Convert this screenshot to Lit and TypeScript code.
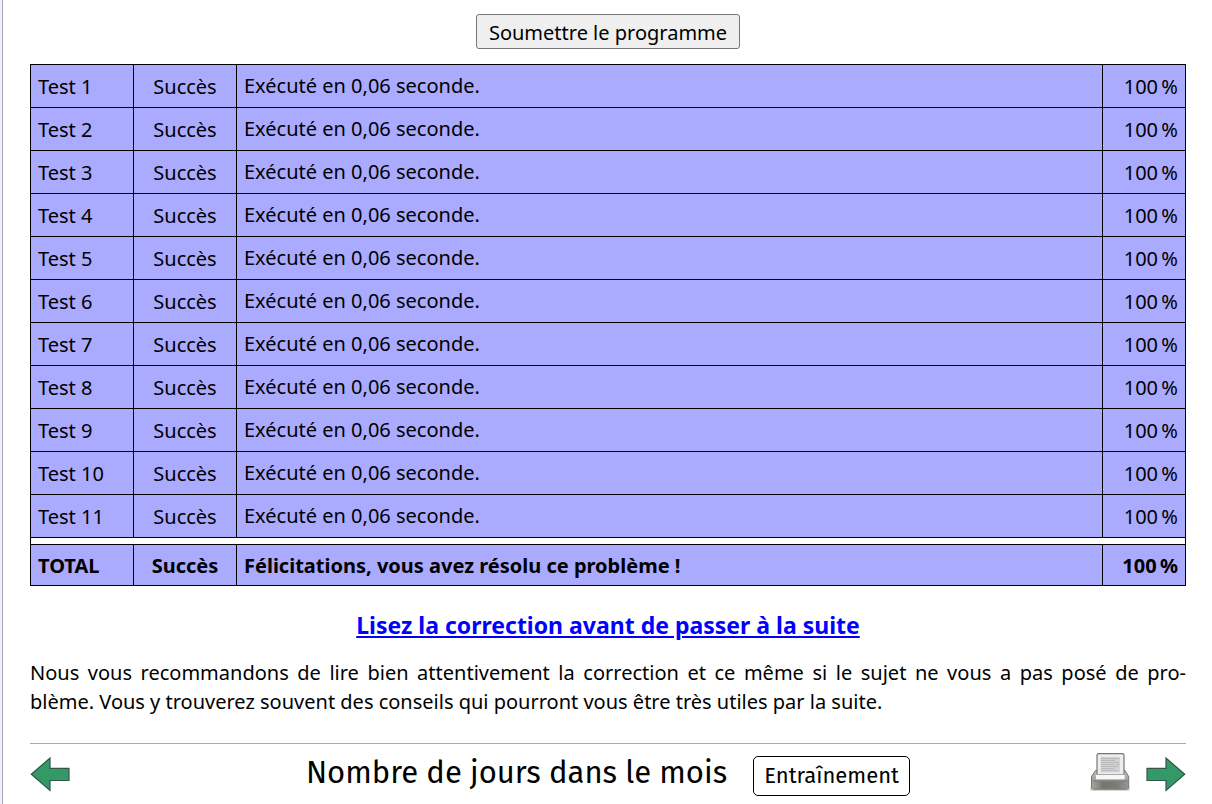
import { LitElement, html, css } from "lit";
import { customElement } from "lit/decorators.js";

interface TestResult {
  name: string;
  status: string;
  message: string;
  score: string;
}

const results: TestResult[] = Array.from({ length: 11 }, (_, i) => ({
  name: `Test ${i + 1}`,
  status: "Succès",
  message: "Exécuté en 0,06 seconde.",
  score: "100\u202f%",
}));

@customElement("result-table")
class ResultTable extends LitElement {
  static styles = css`
    :host {
      display: block;
    }
    table {
      width: 100%;
      border-collapse: collapse;
      border: 1px solid #000;
      table-layout: fixed;
    }
    .narrow {
      width: 103px;
    }
    .score-col {
      width: 83px;
    }
    th,
    td {
      box-sizing: border-box;
      height: 43px;
      padding: 0 7px;
      border: 1px solid #000;
      background: #aaaaff;
      font-weight: normal;
      text-align: left;
      vertical-align: middle;
    }
    .status {
      text-align: center;
    }
    .message {
      padding: 0 7px 2px;
    }
    .score {
      text-align: right;
    }
    .gap td {
      height: 7px;
      padding: 0;
      background: #fff;
    }
    .total th,
    .total td {
      height: 41px;
      padding: 1px 7px 0;
      font-weight: bold;
    }
  `;

  render() {
    return html`
      <table>
        <colgroup>
          <col class="narrow" />
          <col class="narrow" />
          <col />
          <col class="score-col" />
        </colgroup>
        <tbody>
          ${results.map(
            (r) => html`<tr>
              <th scope="row">${r.name}</th>
              <td class="status">${r.status}</td>
              <td class="message">${r.message}</td>
              <td class="score">${r.score}</td>
            </tr>`
          )}
          <tr class="gap"><td colspan="4"></td></tr>
          <tr class="total">
            <th scope="row">TOTAL</th>
            <td class="status">Succès</td>
            <td>Félicitations, vous avez résolu ce problème !</td>
            <td class="score">${"100\u202f%"}</td>
          </tr>
        </tbody>
      </table>
    `;
  }
}

@customElement("page-footer")
class PageFooter extends LitElement {
  static styles = css`
    :host {
      display: grid;
      grid-template-columns: 96px 1fr 96px;
      align-items: center;
      border-top: 1px solid #aaa;
      padding-top: 6px;
    }
    .middle {
      display: flex;
      justify-content: center;
      align-items: center;
      gap: 26px;
    }
    h1 {
      margin: 0;
      font-family: "Fira Sans", "Noto Sans", sans-serif;
      font-size: 31px;
      line-height: 40px;
      font-weight: normal;
      white-space: nowrap;
    }
    .tag {
      box-sizing: border-box;
      height: 40px;
      margin-top: 6px;
      padding: 0 10px;
      border: 1px solid #000;
      border-radius: 5px;
      font-family: "Fira Sans", "Noto Sans", sans-serif;
      font-size: 22px;
      line-height: 38px;
    }
    .nav {
      display: flex;
      align-items: center;
      gap: 16px;
    }
    .end {
      justify-content: flex-end;
    }
    a,
    svg {
      display: block;
    }
  `;

  render() {
    return html`
      <nav class="nav">
        <a href="#precedent" aria-label="Page précédente">
          <svg width="40" height="40" viewBox="0 0 40 40">
            <path d="M1.300 21.300 20 5V15.300H39V27.500H20V37.500Z" fill="#339966" stroke="#35564a" stroke-width="1.200" />
          </svg>
        </a>
      </nav>
      <div class="middle">
        <h1>Nombre de jours dans le mois</h1>
        <span class="tag">Entraînement</span>
      </div>
      <nav class="nav end">
        <a href="#imprimer" aria-label="Imprimer">
          <svg width="40" height="40" viewBox="0 0 40 40">
            <defs>
              <linearGradient id="body" x1="0" y1="0" x2="0" y2="1">
                <stop offset="0" stop-color="#c2c2bd" />
                <stop offset=".5" stop-color="#a2a29d" />
                <stop offset="1" stop-color="#8c8c87" />
              </linearGradient>
              <linearGradient id="front" x1="0" y1="0" x2="1" y2="0">
                <stop offset="0" stop-color="#a6a6a1" />
                <stop offset=".3" stop-color="#767671" />
                <stop offset=".7" stop-color="#7c7c77" />
                <stop offset="1" stop-color="#969691" />
              </linearGradient>
            </defs>
            <rect x="0" y="33.500" width="40" height="4.500" rx="2" fill="#999" opacity=".4" />
            <path d="M5.500 17.500H35L38.700 23.500V34Q38.700 36.200 36.500 36.200H3.700Q1.500 36.200 1.500 34V23.500Z" fill="url(#body)" stroke="#74746f" />
            <path d="M2 28.500H38.200V34Q38.200 35.700 36.500 35.700H3.700Q2 35.700 2 34Z" fill="url(#front)" />
            <path d="M8.700.700H32.300Q34 .700 34 2.400V21.500H7V2.400Q7 .700 8.700 .700Z" fill="#ededed" stroke="#777" stroke-width="1.200" />
            <path d="M10.700 4H30V19.500H10.700Z" fill="#d2d2d2" />
            <path d="M11 5.500H29M11 7.500H25M11 9.500H29M11 11.500H24M26 11.500H29M11 13.500H28M11 15.500H24M11 17.500H27" stroke="#bababa" />
            <path d="M6 22H34.700V26.300H6Z" fill="#f7f7f7" />
            <path d="M6 21.500H34.700" stroke="#a8a8a8" />
            <path d="M3 28H37.500" stroke="#73736e" />
          </svg>
        </a>
        <a href="#suivant" aria-label="Page suivante">
          <svg width="40" height="40" viewBox="0 0 40 40">
            <path d="M38.700 21.300 20 5V15.300H1V27.500H20V37.500Z" fill="#339966" stroke="#35564a" stroke-width="1.200" />
          </svg>
        </a>
      </nav>
    `;
  }
}

@customElement("app-root")
class AppRoot extends LitElement {
  static styles = css`
    :host {
      display: block;
      box-sizing: border-box;
      min-height: 100vh;
      padding-left: 2px;
      background: #eeeeff;
      color: #000;
      font-family: "Noto Sans", sans-serif;
      font-size: 20px;
      line-height: 29px;
    }
    main {
      box-sizing: border-box;
      min-height: 100vh;
      padding: 14px 26px 0 27px;
      border-left: 1px solid #aaaaaa;
      background: #fff;
    }
    .submit {
      display: flex;
      justify-content: center;
      margin-bottom: 15px;
    }
    button {
      box-sizing: border-box;
      height: 35px;
      padding: 2px 12px 0;
      border: 1px solid #767676;
      border-radius: 3px;
      background: #efefef;
      color: #000;
      font: inherit;
    }
    h2 {
      margin: 25px 0 18px;
      font-size: 23px;
      line-height: 29px;
      text-align: center;
    }
    h2 a {
      color: #0000ff;
    }
    p {
      margin: 0 0 27px;
      text-align: justify;
    }
    .full-line {
      display: block;
      text-align-last: justify;
    }
  `;

  render() {
    return html`
      <main>
        <div class="submit"><button type="button">Soumettre le programme</button></div>
        <result-table></result-table>
        <h2><a href="#correction">Lisez la correction avant de passer à la suite</a></h2>
        <p>
          <span class="full-line"
            >Nous vous recommandons de lire bien attentivement la correction et ce même si le sujet
            ne vous a pas posé de pro-</span
          >blème. Vous y trouverez souvent des conseils qui pourront vous être très utiles par la
          suite.
        </p>
        <page-footer></page-footer>
      </main>
    `;
  }
}
